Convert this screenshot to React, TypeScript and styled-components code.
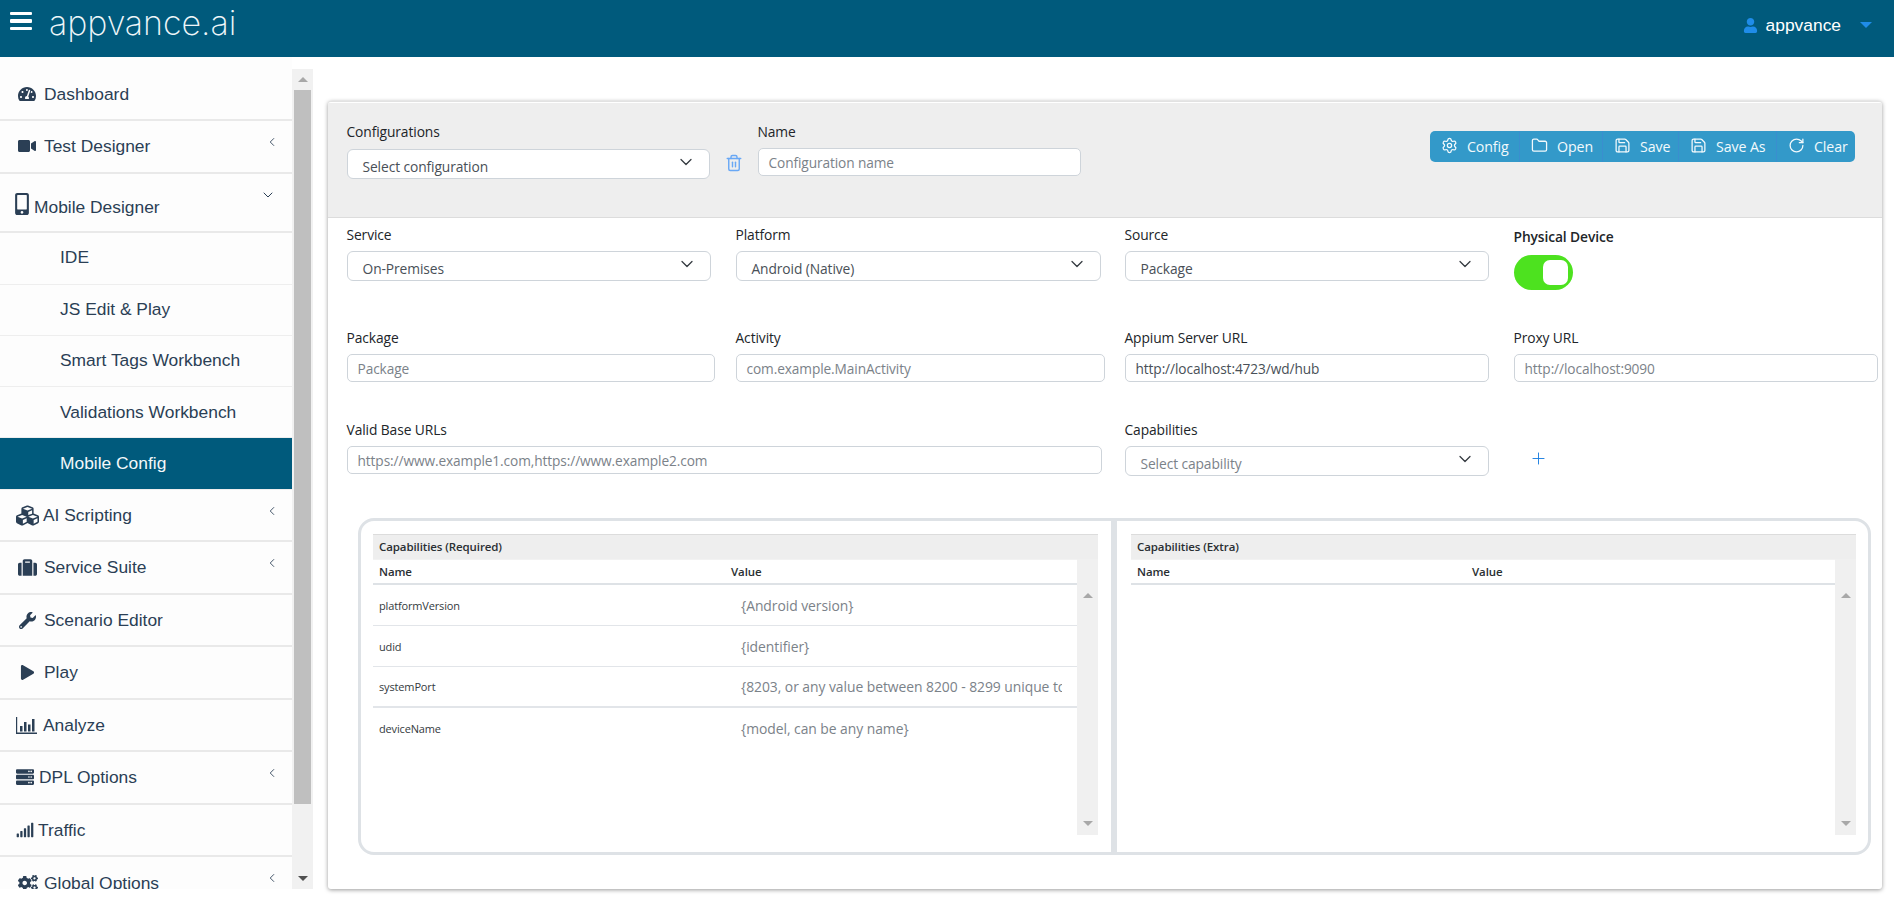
import React from "react";
import styled, { createGlobalStyle } from "styled-components";
import { FaTachometerAlt, FaVideo, FaMobileAlt, FaCubes, FaSuitcase, FaWrench, FaPlay, FaServer, FaSignal, FaCogs, FaUser } from "react-icons/fa";
import { Settings, Folder, Save, RotateCw, ChevronDown, ChevronLeft, Plus, Trash2 } from "lucide-react";

const Global = createGlobalStyle`
  html, body { margin: 0; padding: 0; background: #fff; overflow: hidden; }
  * { box-sizing: border-box; }
  #root { width: 1894px; height: 899px; overflow: hidden; }
`;
const UI = `"Open Sans", "Noto Sans", sans-serif`;
const MENU = `"Liberation Sans", Arial, sans-serif`;

const Page = styled.div`display: flex; flex-direction: column; width: 1894px; height: 899px; overflow: hidden;`;
const TopBar = styled.header`flex: 0 0 57px; background: #005a7c; display: flex; align-items: flex-start; color: #fff;`;
const Burger = styled.div`
  width: 22px; height: 18px; margin: 12px 0 0 10px; display: flex; flex-direction: column; justify-content: space-between;
  span { display: block; height: 3.4px; background: #fff; border-radius: 1px; }
`;
const Logo = styled.div`
  margin: 0 0 0 17px; font: 200 34px/46px Inter, Lato, sans-serif; letter-spacing: -0.05px; color: #eef6f9;
`;
const UserBox = styled.div`margin: 15px 0 0 auto; display: flex; align-items: center; height: 20px; font: 17.4px ${MENU}; color: #fff;`;
const UserIcon = styled(FaUser)`color: #1f8ce8; width: 15px; height: 15px; margin-right: 8px;`;
const Caret = styled.span`
  width: 0; height: 0; margin: 0 22px 0 19px; border-left: 6px solid transparent; border-right: 6px solid transparent; border-top: 6px solid #1f8ce8;
`;
const Body = styled.div`flex: 1; display: flex; min-height: 0;`;
const Sidebar = styled.aside`flex: 0 0 313px; height: 832px; display: flex;`;
const Menu = styled.nav`flex: 0 0 292px; height: 100%; overflow: hidden; background: #fdfdfd; font: 17.4px ${MENU}; color: #2b3f55;`;
const Row = styled.div<{ $h: number; $active?: boolean; $sub?: boolean; $shift?: number }>`
  height: ${p => p.$h}px; display: flex; align-items: center; position: relative;
  padding: ${p => Math.max(p.$shift ?? 0, 0)}px 0 ${p => Math.max(-(p.$shift ?? 0), 0)}px ${p => (p.$sub ? 60 : 16)}px;
  border-bottom: ${p => (p.$sub ? 1 : 2)}px solid ${p => (p.$sub ? "#eeeeee" : "#e9e9e9")};
  background: ${p => (p.$active ? "#005a7c" : "transparent")};
  color: ${p => (p.$active ? "#f3f8fa" : "inherit")};
`;
const IconSlot = styled.span<{ $w: number; $lift?: number }>`
  flex: 0 0 ${p => p.$w}px; min-width: 0; display: flex; align-items: center; margin-top: ${p => -(p.$lift ?? 0)}px; color: #2b3f55;
  svg { flex: none; }
`;
const Arrow = styled.span<{ $top: number; $left: number }>`
  position: absolute; left: ${p => p.$left}px; top: ${p => p.$top}px; display: flex; color: #2b3f55;
`;
const MenuScroll = styled.div`
  flex: 0 0 21px; margin-top: 12px; height: 820px; background: #f1f1f1; display: flex; flex-direction: column; align-items: center;
`;
const ArrowUp = styled.i<{ $c?: string }>`
  display: block; width: 0; height: 0; border-left: 5px solid transparent; border-right: 5px solid transparent; border-bottom: 5px solid ${p => p.$c ?? "#a8a8a8"};
`;
const ArrowDown = styled.i<{ $c?: string }>`
  display: block; width: 0; height: 0; border-left: 5px solid transparent; border-right: 5px solid transparent; border-top: 5px solid ${p => p.$c ?? "#a8a8a8"};
`;
const ScrollCap = styled.div<{ $h: number }>`flex: 0 0 ${p => p.$h}px; display: flex; align-items: center; justify-content: center;`;
const Thumb = styled.div`flex: 0 0 714px; width: 17px; background: #bfbfbf;`;
const ScrollFill = styled.div`flex: 1;`;

const Main = styled.main`flex: 1; padding: 44px 0 0 15px; min-width: 0;`;
const Card = styled.section`
  width: 1554px; height: 788px; border-radius: 3px; background: #fff; border-top: 1px solid #e2e2e2;
  box-shadow: 0 1px 4px rgba(0,0,0,.4); font: 14px ${UI}; color: #212529; display: flex; flex-direction: column;
`;
const ConfigBar = styled.div`
  flex: 0 0 115px; background: #eeeeee; border-bottom: 1px solid #dcdcdc; margin-top: 1px;
  display: grid; grid-template-columns: 411px 380px 1fr; padding: 0 0 0 18.5px; align-items: start;
`;
const Label = styled.div<{ $bold?: boolean }>`
  height: 20px; line-height: 20px; font-size: 13.8px; font-weight: ${p => (p.$bold ? 600 : 400)}; letter-spacing: -.1px; color: #212529; white-space: nowrap;
`;
const SelectBox = styled.div<{ $w: number; $mt?: number }>`
  width: ${p => p.$w}px; height: 30px; margin-top: ${p => p.$mt ?? 6}px; border: 1px solid #ced4da; border-radius: 6px; background: #fff;
  display: flex; align-items: center; padding: 5px 0 0 15px; font-size: 13.8px; letter-spacing: -.1px; color: #495057; position: relative;
`;
const SelPlaceholder = styled.span`color: #7b8289;`;
const SelChevron = styled(ChevronDown)`
  position: absolute; right: 13px; top: 2px; width: 20px; height: 20px; color: #343a40; stroke-width: 1.5;
`;
const TextBox = styled.div<{ $w: number; $ph?: boolean }>`
  width: ${p => p.$w}px; height: 28px; margin-top: 6px; border: 1px solid #ced4da; border-radius: 5px; background: #fff;
  display: flex; align-items: center; padding: 0 10px; font-size: 13.7px; letter-spacing: -.1px; color: ${p => (p.$ph ? "#7b8289" : "#495057")}; white-space: nowrap; overflow: hidden;
`;
const ConfigField = styled.div`padding-top: 19px;`;
const FirstCell = styled.div`display: grid; grid-template-columns: 363px 48px; align-items: start;`;
const TrashIcon = styled(Trash2)`width: 18px; height: 18px; margin: 51px 0 0 15px; color: #69a8f5; stroke-width: 1.9;`;
const ButtonGroup = styled.div`
  justify-self: start; margin: 28px 0 0 292.5px; display: flex; height: 31px; border-radius: 5px; overflow: hidden; background: #3399c9;
`;
const GroupBtn = styled.div<{ $w: number }>`
  width: ${p => p.$w}px; display: flex; align-items: center; padding-left: 11px; gap: 9px; color: #f2f9fc; font-size: 14.2px; letter-spacing: -.1px;
  border-left: 1px solid #3a8ecf;
  &:first-child { border-left: 0; }
  svg { width: 17px; height: 17px; stroke-width: 1.8; margin-top: -3px; flex: none; }
`;
const FormRow = styled.div<{ $h: number; $pt: number }>`
  height: ${p => p.$h}px; padding: ${p => p.$pt}px 0 0 18.5px; display: grid; grid-template-columns: repeat(4, 389px); align-items: start;
`;
const Cell = styled.div<{ $span?: number }>`grid-column: span ${p => p.$span ?? 1};`;
const PlusIcon = styled(Plus)`width: 19px; height: 19px; margin: 29px 0 0 15px; color: #1e7fe0; stroke-width: 1.2;`;
const SwitchTrack = styled.div`
  width: 59px; height: 35px; margin-top: 8px; border-radius: 17.5px; background: #4de21f; display: flex; justify-content: flex-end; padding: 5px; 
`;
const Knob = styled.div`width: 25px; height: 25px; border-radius: 7px; background: #fff;`;
const PhysLabel = styled(Label)`margin-top: 2px;`;

const CapFrame = styled.div`
  margin: 0 0 0 30px; width: 1513px; height: 337px; border: 3px solid #dee2e6; border-radius: 16px; display: grid; grid-template-columns: 750px 6px 751px;
`;
const CapDivider = styled.div`background: #dee2e6;`;
const Panel = styled.div<{ $l: number; $r: number }>`padding: 13px ${p => p.$r}px 0 ${p => p.$l}px;`;
const PanelTitle = styled.div`
  height: 25px; background: #eeeeee; border-top: 1px solid #dcdcdc; padding-left: 6px; line-height: 24px; font-size: 11.5px; font-weight: 600; letter-spacing: -.1px; color: #2a2f33;
`;
const PanelBody = styled.div`display: flex; height: 276px;`;
const Table = styled.div`flex: 1; min-width: 0;`;
const TableHead = styled.div<{ $name: number }>`
  height: 26px; display: grid; grid-template-columns: ${p => p.$name}px 1fr; align-items: center; padding-left: 6px; border-bottom: 2px solid #dee2e6; border-top: 1px solid #f2f2f2;
  font-size: 11.5px; font-weight: 600; letter-spacing: -.1px; color: #2a2f33;
`;
const TableRow = styled.div<{ $name: number; $thick?: boolean; $none?: boolean }>`
  height: 41px; display: grid; grid-template-columns: ${p => p.$name}px minmax(0, 1fr); align-items: center; padding: 0 15px 0 6px;
  border-bottom: ${p => (p.$none ? "0" : p.$thick ? "2px solid #e2e5e9" : "1px solid #e2e5e9")};
`;
const CapName = styled.div`font-size: 11px; letter-spacing: -.15px; color: #343a40;`;
const CapValue = styled.div`
  padding-left: 10px; font-size: 13.9px; letter-spacing: -.05px; color: #7b8289; white-space: nowrap; overflow: hidden;
`;
const PanelScroll = styled.div`flex: 0 0 21px; background: #f0f0f0; display: flex; flex-direction: column; align-items: center; justify-content: space-between; padding: 34px 0 9px;`;

const AnalyzeIcon = () => (
  <svg width="21" height="17" viewBox="0 0 21 17" fill="#2b3f55">
    <path d="M0 0h1.2v15.6H21V17H0z" />
    <rect x="4" y="9" width="2.5" height="5.5" /><rect x="8" y="5" width="2.5" height="9.5" />
    <rect x="12" y="7.5" width="2.5" height="7" /><rect x="16" y="2" width="2.5" height="12.5" />
  </svg>
);

type Item = { label: string; icon?: React.ReactNode; slot?: number; lift?: number; arrow?: "l" | "d"; h: number; sub?: boolean; active?: boolean; shift?: number; };
const items: Item[] = [
  { label: "Dashboard", icon: <FaTachometerAlt size={18} style={{ marginLeft: 2 }} />, slot: 28, h: 64, shift: 12 },
  { label: "Test Designer", icon: <FaVideo size={18} style={{ marginLeft: 2 }} />, slot: 28, arrow: "l", h: 53, shift: -1 },
  { label: "Mobile Designer", icon: <FaMobileAlt size={22} style={{ marginLeft: -5 }} />, slot: 18, lift: 8, arrow: "d", h: 59, shift: 10 },
  { label: "IDE", sub: true, h: 52, shift: -2 },
  { label: "JS Edit & Play", sub: true, h: 51, shift: -2 },
  { label: "Smart Tags Workbench", sub: true, h: 51, shift: -2 },
  { label: "Validations Workbench", sub: true, h: 51, shift: 0 },
  { label: "Mobile Config", sub: true, active: true, h: 52, shift: -1 },
  { label: "AI Scripting", icon: <FaCubes size={23} />, slot: 27, arrow: "l", h: 52, shift: 0 },
  { label: "Service Suite", icon: <FaSuitcase size={19} style={{ marginLeft: 2 }} />, slot: 28, arrow: "l", h: 53, shift: 0 },
  { label: "Scenario Editor", icon: <FaWrench size={17} style={{ marginLeft: 3 }} />, slot: 28, h: 52, shift: 1 },
  { label: "Play", icon: <FaPlay size={15} style={{ marginLeft: 4 }} />, slot: 28, h: 53, shift: 0 },
  { label: "Analyze", icon: <AnalyzeIcon />, slot: 27, h: 52, shift: 0 },
  { label: "DPL Options", icon: <FaServer size={18} />, slot: 23, arrow: "l", h: 53, shift: -1 },
  { label: "Traffic", icon: <FaSignal size={18} />, slot: 22, h: 52, shift: 0 },
  { label: "Global Options", icon: <FaCogs size={20} style={{ marginLeft: 2 }} />, slot: 28, arrow: "l", h: 52, shift: 2 },
];

const caps = [
  ["platformVersion", "{Android version}"],
  ["udid", "{identifier}"],
  ["systemPort", "{8203, or any value between 8200 - 8299 unique to the device}"],
  ["deviceName", "{model, can be any name}"],
];

export default function App() {
  return (
    <Page>
      <Global />
      <TopBar>
        <Burger><span /><span /><span /></Burger>
        <Logo>appvance.ai</Logo>
        <UserBox><UserIcon />appvance<Caret /></UserBox>
      </TopBar>
      <Body>
        <Sidebar>
          <Menu>
            {items.map(it => (
              <Row key={it.label} $h={it.h} $sub={it.sub} $active={it.active} $shift={it.shift}>
                {it.icon && <IconSlot $w={it.slot!} $lift={it.lift}>{it.icon}</IconSlot>}
                {it.label}
                {it.arrow === "l" && <Arrow $top={14} $left={265}><ChevronLeft size={14} strokeWidth={1.5} /></Arrow>}
                {it.arrow === "d" && <Arrow $top={13} $left={260}><ChevronDown size={16} strokeWidth={1.5} /></Arrow>}
              </Row>
            ))}
          </Menu>
          <MenuScroll>
            <ScrollCap $h={21}><ArrowUp /></ScrollCap>
            <Thumb />
            <ScrollFill />
            <ScrollCap $h={22}><ArrowDown $c="#505050" /></ScrollCap>
          </MenuScroll>
        </Sidebar>
        <Main>
          <Card>
            <ConfigBar>
              <FirstCell>
                <ConfigField>
                  <Label>Configurations</Label>
                  <SelectBox $w={363} $mt={7}>Select configuration<SelChevron /></SelectBox>
                </ConfigField>
                <TrashIcon />
              </FirstCell>
              <ConfigField>
                <Label>Name</Label>
                <TextBox $w={323} $ph>Configuration name</TextBox>
              </ConfigField>
              <ButtonGroup>
                <GroupBtn $w={89}><Settings /><span>Config</span></GroupBtn>
                <GroupBtn $w={83}><Folder /><span>Open</span></GroupBtn>
                <GroupBtn $w={76}><Save /><span>Save</span></GroupBtn>
                <GroupBtn $w={98}><Save /><span>Save As</span></GroupBtn>
                <GroupBtn $w={79}><RotateCw /><span>Clear</span></GroupBtn>
              </ButtonGroup>
            </ConfigBar>
            <FormRow $h={103} $pt={7}>
              <Cell><Label>Service</Label><SelectBox $w={364}>On-Premises<SelChevron /></SelectBox></Cell>
              <Cell><Label>Platform</Label><SelectBox $w={365}>Android (Native)<SelChevron /></SelectBox></Cell>
              <Cell><Label>Source</Label><SelectBox $w={364}>Package<SelChevron /></SelectBox></Cell>
              <Cell><PhysLabel $bold>Physical Device</PhysLabel><SwitchTrack><Knob /></SwitchTrack></Cell>
            </FormRow>
            <FormRow $h={91} $pt={7}>
              <Cell><Label>Package</Label><TextBox $w={368} $ph>Package</TextBox></Cell>
              <Cell><Label>Activity</Label><TextBox $w={369} $ph>com.example.MainActivity</TextBox></Cell>
              <Cell><Label>Appium Server URL</Label><TextBox $w={364}>http://localhost:4723/wd/hub</TextBox></Cell>
              <Cell><Label>Proxy URL</Label><TextBox $w={364} $ph>http://localhost:9090</TextBox></Cell>
            </FormRow>
            <FormRow $h={106} $pt={8}>
              <Cell $span={2}><Label>Valid Base URLs</Label><TextBox $w={755} $ph>https://www.example1.com,https://www.example2.com</TextBox></Cell>
              <Cell><Label>Capabilities</Label><SelectBox $w={364}><SelPlaceholder>Select capability</SelPlaceholder><SelChevron /></SelectBox></Cell>
              <Cell><PlusIcon /></Cell>
            </FormRow>
            <CapFrame>
              <Panel $l={12} $r={13}>
                <PanelTitle>Capabilities (Required)</PanelTitle>
                <PanelBody>
                  <Table>
                    <TableHead $name={352}><span>Name</span><span>Value</span></TableHead>
                    {caps.map((c, i) => (
                      <TableRow key={c[0]} $name={352} $thick={i === 2} $none={i === 3}>
                        <CapName>{c[0]}</CapName><CapValue>{c[1]}</CapValue>
                      </TableRow>
                    ))}
                  </Table>
                  <PanelScroll><ArrowUp /><ArrowDown /></PanelScroll>
                </PanelBody>
              </Panel>
              <CapDivider />
              <Panel $l={14} $r={12}>
                <PanelTitle>Capabilities (Extra)</PanelTitle>
                <PanelBody>
                  <Table>
                    <TableHead $name={335}><span>Name</span><span>Value</span></TableHead>
                  </Table>
                  <PanelScroll><ArrowUp /><ArrowDown /></PanelScroll>
                </PanelBody>
              </Panel>
            </CapFrame>
          </Card>
        </Main>
      </Body>
    </Page>
  );
}
